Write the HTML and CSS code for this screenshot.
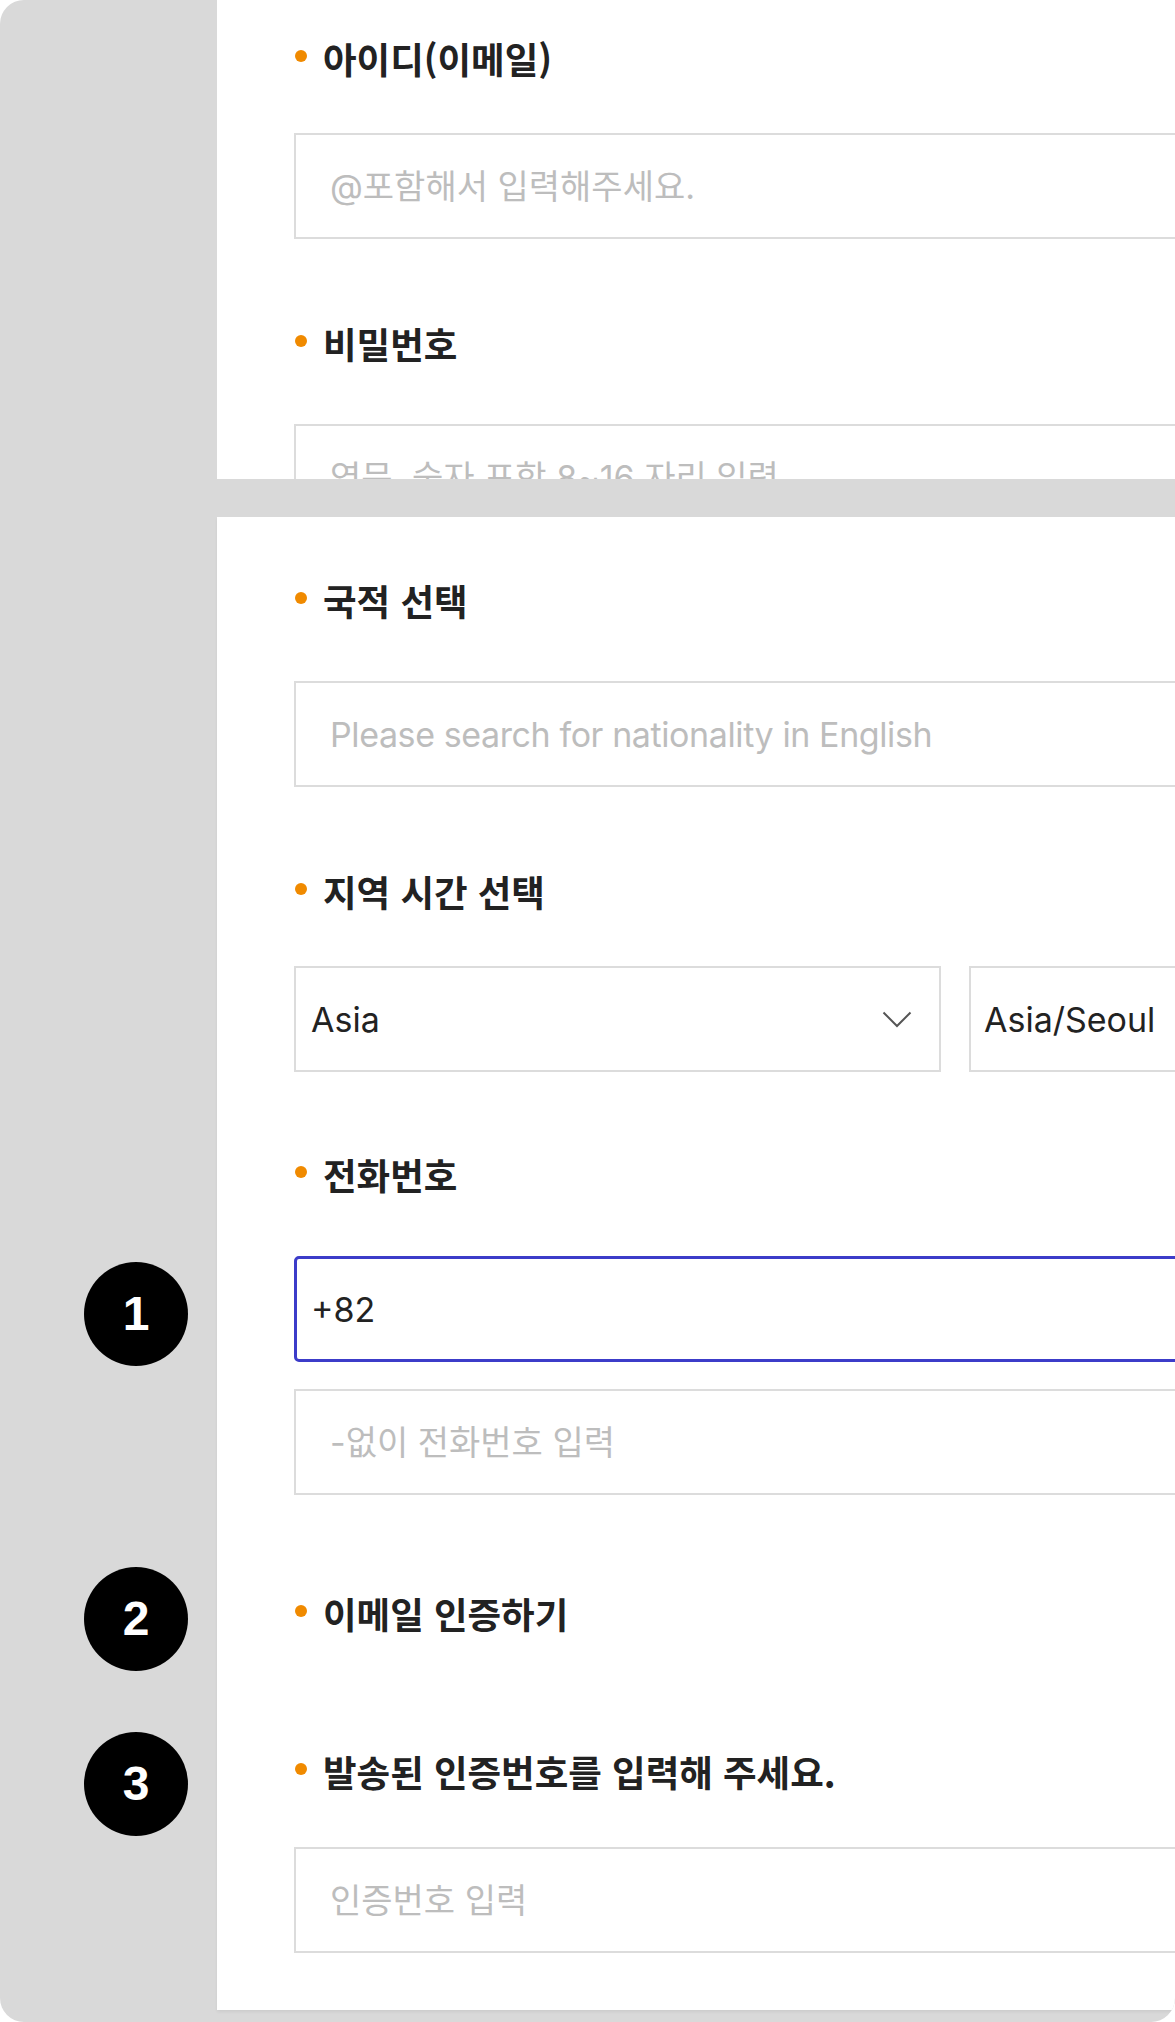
FILE: index.html
```html
<!DOCTYPE html>
<html lang="ko">
<head>
<meta charset="utf-8">
<title>회원가입</title>
<link rel="stylesheet" href="styles.css">
</head>
<body>
<div class="frame">
  <section class="card card-top">
    <div class="label">아이디(이메일)</div>
    <input class="field gap-li" type="text" placeholder="@포함해서 입력해주세요.">
    <div class="label gap-fl">비밀번호</div>
    <input class="field gap-li2" type="text" placeholder="영문, 숫자 포함 8~16 자리 입력">
  </section>

  <section class="card card-main">
    <div class="label">국적 선택</div>
    <input class="field field-latin gap-li2" type="text" placeholder="Please search for nationality in English">

    <div class="label gap-fl">지역 시간 선택</div>
    <div class="select-row gap-li">
      <div class="select select-region">
        <span>Asia</span>
        <svg class="chevron" width="30" height="17" viewBox="0 0 30 17" aria-hidden="true">
          <polyline points="1.5,1.5 15,15 28.5,1.5" fill="none" stroke="#555" stroke-width="2"/>
        </svg>
      </div>
      <div class="select select-zone"><span>Asia/Seoul</span></div>
    </div>

    <div class="label gap-fl2">전화번호</div>
    <div class="row gap-li3">
      <span class="badge badge-1">1</span>
      <input class="field field-focus" type="text" value="+82">
    </div>
    <input class="field gap-pair" type="text" placeholder="-없이 전화번호 입력">

    <div class="label gap-mail">
      <span class="badge badge-2">2</span>
      이메일 인증하기
    </div>

    <div class="label gap-code">
      <span class="badge badge-3">3</span>
      발송된 인증번호를 입력해 주세요.
    </div>
    <input class="field gap-li4" type="text" placeholder="인증번호 입력">
  </section>
</div>
</body>
</html>
```

FILE: styles.css
```css
* {
  box-sizing: border-box;
}

html,
body {
  margin: 0;
  padding: 0;
  background: #ffffff;
}

body {
  font-family: Inter, "Noto Sans CJK KR", sans-serif;
  color: #222222;
}

.frame {
  width: 1175px;
  height: 2022px;
  background: #d9d9d9;
  border-radius: 24px 0 24px 24px;
  overflow: hidden;
  display: flex;
  flex-direction: column;
  gap: 38px;
  padding: 0 0 12px 217px;
}

.card {
  background: #ffffff;
  padding-left: 77px;
  display: flex;
  flex-direction: column;
  align-items: flex-start;
}

.card > * {
  flex: none;
}

.card-top {
  flex: none;
  height: 479px;
  padding-top: 38px;
  overflow: hidden;
}

.card-main {
  flex: 1;
  padding-top: 63px;
  box-shadow: 0 2px 3px rgba(0, 0, 0, 0.06);
}

/* labels */
.label {
  position: relative;
  display: flex;
  align-items: center;
  gap: 16px;
  height: 40px;
  font-family: "Noto Sans CJK KR", sans-serif;
  font-weight: 700;
  font-size: 36.5px;
  color: #222222;
  white-space: nowrap;
}

.label::before {
  content: "";
  flex: none;
  width: 12px;
  height: 12px;
  margin-left: 1px;
  margin-top: -5px;
  border-radius: 50%;
  background: #f08a00;
}

/* inputs */
.field {
  display: block;
  width: calc(100% + 60px);
  height: 106px;
  margin-right: -60px;
  padding: 0 0 0 34px;
  border: 2px solid #dcdcdc;
  border-radius: 0;
  background: #ffffff;
  font-family: Inter, "Noto Sans CJK KR", sans-serif;
  font-size: 34px;
  color: #222222;
  outline: none;
}

.field::placeholder {
  color: #bdbdbd;
  opacity: 1;
}

.field-latin {
  letter-spacing: -0.4px;
}

.field-focus {
  width: 100%;
  margin-right: 0;
  padding-left: 14px;
  border: 3px solid #3c3cc9;
  border-radius: 5px;
  font-size: 34px;
}

.row {
  position: relative;
  width: calc(100% + 60px);
  margin-right: -60px;
}

/* selects */
.select-row {
  display: flex;
  gap: 28px;
  width: calc(100% + 60px);
  margin-right: -60px;
}

.select {
  position: relative;
  display: flex;
  align-items: center;
  height: 106px;
  border: 2px solid #dcdcdc;
  background: #ffffff;
  font-size: 34px;
  color: #222222;
}

.select-region {
  flex: none;
  width: 647px;
  padding-left: 15px;
  justify-content: space-between;
  padding-right: 27px;
}

.select-zone {
  flex: 1;
  padding-left: 13px;
}

.chevron {
  display: block;
}

/* badges */
.badge {
  position: absolute;
  left: -210px;
  width: 104px;
  height: 104px;
  border-radius: 50%;
  background: #000000;
  color: #ffffff;
  display: flex;
  align-items: center;
  justify-content: center;
  font-family: "Liberation Sans", Arial, sans-serif;
  font-weight: 700;
  font-size: 48px;
  line-height: 1;
}

.badge-1 {
  top: 6px;
}

.badge-2 {
  top: -26px;
}

.badge-3 {
  top: -19px;
}

/* vertical rhythm */
.gap-li {
  margin-top: 55px;
}

.gap-li2 {
  margin-top: 61px;
}

.gap-li3 {
  margin-top: 62px;
}

.gap-li4 {
  margin-top: 56px;
}

.gap-fl {
  margin-top: 84px;
}

.gap-fl2 {
  margin-top: 82px;
}

.gap-pair {
  margin-top: 27px;
}

.gap-mail {
  margin-top: 98px;
}

.gap-code {
  margin-top: 118px;
}
```
